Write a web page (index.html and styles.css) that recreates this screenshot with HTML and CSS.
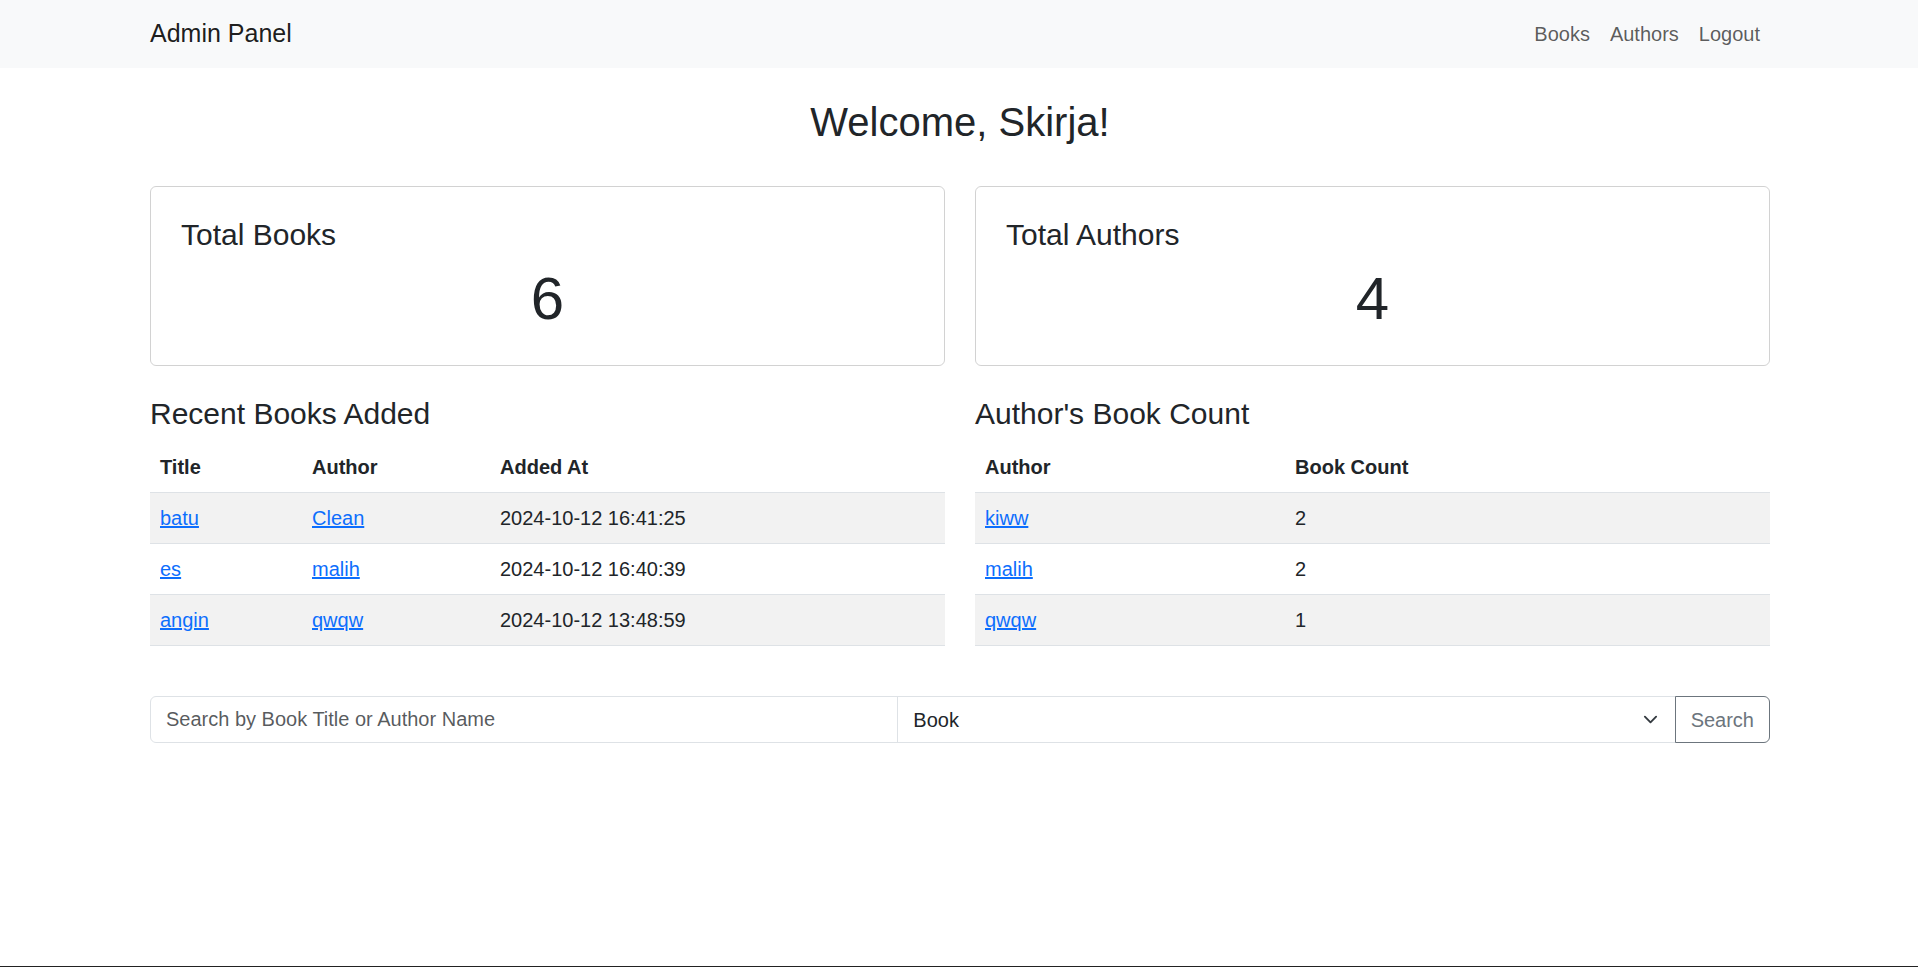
FILE: index.html
```html
<!DOCTYPE html>
<html lang="en">
<head>
<meta charset="utf-8">
<title>Admin Panel</title>
<link rel="stylesheet" href="styles.css">
</head>
<body>
<nav class="navbar">
  <div class="container nav-inner">
    <a class="brand" href="#">Admin Panel</a>
    <ul class="nav-links">
      <li><a class="nav-link" href="#">Books</a></li>
      <li><a class="nav-link" href="#">Authors</a></li>
      <li><a class="nav-link" href="#">Logout</a></li>
    </ul>
  </div>
</nav>

<main class="container main">
  <h2 class="welcome">Welcome, Skirja!</h2>

  <div class="row stats">
    <div class="card">
      <h4 class="card-title">Total Books</h4>
      <p class="stat">6</p>
    </div>
    <div class="card">
      <h4 class="card-title">Total Authors</h4>
      <p class="stat">4</p>
    </div>
  </div>

  <div class="row lists">
    <section>
      <h4 class="section-title">Recent Books Added</h4>
      <table class="table">
        <colgroup>
          <col class="w-title">
          <col class="w-author">
          <col>
        </colgroup>
        <thead>
          <tr><th>Title</th><th>Author</th><th>Added At</th></tr>
        </thead>
        <tbody>
          <tr><td><a href="#">batu</a></td><td><a href="#">Clean</a></td><td>2024-10-12 16:41:25</td></tr>
          <tr><td><a href="#">es</a></td><td><a href="#">malih</a></td><td>2024-10-12 16:40:39</td></tr>
          <tr><td><a href="#">angin</a></td><td><a href="#">qwqw</a></td><td>2024-10-12 13:48:59</td></tr>
        </tbody>
      </table>
    </section>
    <section>
      <h4 class="section-title">Author's Book Count</h4>
      <table class="table">
        <colgroup>
          <col class="w-name">
          <col>
        </colgroup>
        <thead>
          <tr><th>Author</th><th>Book Count</th></tr>
        </thead>
        <tbody>
          <tr><td><a href="#">kiww</a></td><td>2</td></tr>
          <tr><td><a href="#">malih</a></td><td>2</td></tr>
          <tr><td><a href="#">qwqw</a></td><td>1</td></tr>
        </tbody>
      </table>
    </section>
  </div>

  <form class="search" action="#">
    <input class="search-input" type="text" placeholder="Search by Book Title or Author Name">
    <select class="search-select">
      <option>Book</option>
      <option>Author</option>
    </select>
    <button class="search-btn" type="button">Search</button>
    <svg class="chevron" viewBox="0 0 16 16" width="15" height="15" aria-hidden="true">
      <path d="m2 5 6 6 6-6" fill="none" stroke="#343a40" stroke-width="2" stroke-linecap="round" stroke-linejoin="round"/>
    </svg>
  </form>
</main>
</body>
</html>
```

FILE: styles.css
```css
* {
  box-sizing: border-box;
}

body {
  margin: 0;
  min-height: 100vh;
  border-bottom: 1px solid #222;
  font-family: "Liberation Sans", Arial, sans-serif;
  font-size: 20px;
  line-height: 1.5;
  color: #212529;
  background: #fff;
}

.container {
  width: 1650px;
  margin: 0 auto;
  padding: 0 14px 0 16px;
}

/* navbar */
.navbar {
  background: #f8f9fa;
}

.nav-inner {
  height: 68px;
  display: flex;
  align-items: center;
  justify-content: space-between;
}

.brand {
  font-size: 25px;
  line-height: 1.5;
  color: rgba(0, 0, 0, 0.9);
  text-decoration: none;
}

.nav-links {
  list-style: none;
  margin: 0;
  padding: 0;
  display: flex;
}

.nav-link {
  display: block;
  padding: 10px;
  color: rgba(0, 0, 0, 0.65);
  text-decoration: none;
}

/* main */
.main {
  padding-top: 30px;
}

.welcome {
  margin: 0;
  font-size: 40px;
  font-weight: 400;
  line-height: 1.2;
  text-align: center;
}

.row {
  display: grid;
  grid-template-columns: 1fr 1fr;
  column-gap: 30px;
  margin-top: 30px;
}

.stats {
  margin-top: 40px;
}

.card {
  border: 1px solid rgba(0, 0, 0, 0.175);
  border-radius: 6px;
  padding: 30px;
}

.card-title,
.section-title {
  margin: 0 0 10px;
  font-size: 30px;
  font-weight: 400;
  line-height: 1.2;
}

.stat {
  margin: 0;
  font-size: 60px;
  line-height: 1.2;
  text-align: center;
}

/* tables */
.table {
  width: 100%;
  border-collapse: collapse;
  margin-bottom: 20px;
}

.w-title { width: 152px; }
.w-author { width: 188px; }
.w-name { width: 310px; }

.table th,
.table td {
  padding: 10px;
  line-height: 30px;
  text-align: left;
  border-bottom: 1px solid #dee2e6;
}

.table th {
  font-weight: 700;
}

.table tbody tr:nth-child(odd) td {
  background: #f2f2f2;
}

.table a {
  color: #0d6efd;
  text-decoration: underline;
}

/* search */
.search {
  position: relative;
  display: flex;
  margin-top: 30px;
}

.search-input,
.search-select,
.search-btn {
  font-family: inherit;
  font-size: 20px;
  line-height: 30px;
  height: 47px;
  margin: 0;
}

.search-input {
  flex: 1 1 0;
  min-width: 0;
  padding: 7.5px 15px;
  border: 1px solid #dee2e6;
  border-radius: 6px 0 0 6px;
  color: #212529;
  background: #fff;
  outline: none;
}

.search-input::placeholder {
  color: rgba(33, 37, 41, 0.75);
}

.search-select {
  flex: 1 1 0;
  min-width: 0;
  margin-left: -1px;
  padding: 7.5px 45px 7.5px 15px;
  border: 1px solid #dee2e6;
  border-radius: 0;
  color: #212529;
  background: #fff;
  appearance: none;
  -webkit-appearance: none;
  outline: none;
}

.search-btn {
  flex: 0 0 auto;
  margin-left: -1px;
  padding: 7.5px 15px;
  border: 1px solid #6c757d;
  border-radius: 0 6px 6px 0;
  color: #6c757d;
  background: transparent;
}

.chevron {
  position: absolute;
  right: 112px;
  top: 16px;
  pointer-events: none;
}
```
